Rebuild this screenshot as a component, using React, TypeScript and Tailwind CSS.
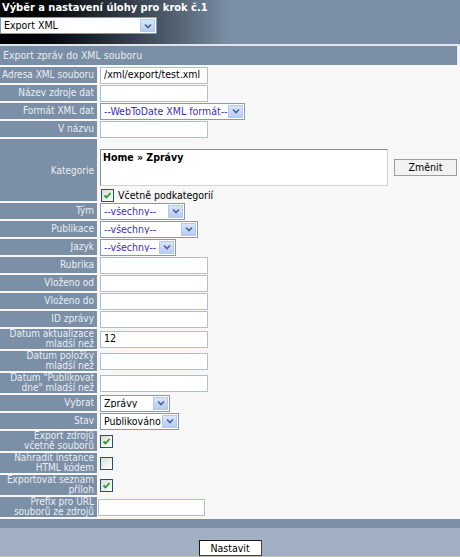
import React from 'react';

const font = { fontFamily: '"DejaVu Sans Condensed", "DejaVu Sans", Verdana, sans-serif' };

function Arrow() {
  return (
    <span className="flex h-full w-[15px] shrink-0 items-center justify-center border border-[#b4c8ee] bg-gradient-to-b from-[#dbe6fd] to-[#b7cbf5]">
      <svg width="8" height="6" viewBox="0 0 8 6">
        <path d="M1 1.5 L4 4.5 L7 1.5" fill="none" stroke="#4d6185" strokeWidth="1.6" />
      </svg>
    </span>
  );
}

function Select({ value, width, purple }: { value: string; width: string; purple?: boolean }) {
  return (
    <div className={`flex h-[17px] items-center border border-[#7f9db9] bg-white p-px ${width}`}>
      <span className={`flex-1 overflow-hidden whitespace-nowrap pl-[2px] text-[10.5px] leading-none ${purple ? 'text-[#3a2fb8]' : 'text-black'}`}>
        {value}
      </span>
      <Arrow />
    </div>
  );
}

function Input({ value, width = 'w-[108px]' }: { value?: string; width?: string }) {
  return (
    <div className={`flex h-[17px] items-center whitespace-nowrap border border-[#a9c0da] bg-white pl-[3px] text-[10.5px] text-black ${width}`}>
      {value}
    </div>
  );
}

function Check({ checked }: { checked?: boolean }) {
  return (
    <span className="flex h-[13px] w-[13px] shrink-0 items-center justify-center border border-[#1c5180] bg-gradient-to-br from-[#dcdcd6] to-white">
      {checked && (
        <svg width="9" height="9" viewBox="0 0 9 9">
          <path d="M1.5 4.5 L3.5 6.5 L7.5 2" fill="none" stroke="#21a121" strokeWidth="1.8" />
        </svg>
      )}
    </span>
  );
}

function Row({ label, tall, children, pad = 'pl-[3px]' }: { label: React.ReactNode; tall?: boolean; children: React.ReactNode; pad?: string }) {
  return (
    <div className={`flex ${tall ? 'h-[20px]' : 'h-[16px]'}`}>
      <div className="flex w-[97px] shrink-0 items-center justify-end whitespace-nowrap bg-[#7b8fa7] pr-[3px] text-right text-[10px] leading-[10px] text-[#e9eef3]">
        <span>{label}</span>
      </div>
      <div className={`flex flex-1 items-center ${pad}`}>{children}</div>
    </div>
  );
}

export default function App() {
  return (
    <div className="h-[557px] w-[460px] overflow-hidden bg-[#f7f7f7] font-stretch-condensed" style={font}>
      {/* header */}
      <div className="h-[44px] bg-gradient-to-r from-black via-[#7a8fa6] via-50% to-[#7a8fa6] pt-px">
        <div className="pl-[2px] text-[11px] font-bold leading-[13px] text-white">Výběr a nastavení úlohy pro krok č.1</div>
        <div className="mt-[3px]">
          <Select value="Export XML" width="w-[157px]" />
        </div>
      </div>
      <div className="h-[2px] bg-[#dfe5ed]" />
      <div className="flex h-[19px] w-[458px] items-center border-r border-[#e4e9f0] bg-[#7a8fa6] pl-[3px] text-[10.5px] text-[#e6ebf1]">
        Export zpráv do XML souboru
      </div>
      <div className="h-[2px]" />

      <div className="flex flex-col gap-[2px]">
        <Row label="Adresa XML souboru"><Input value="/xml/export/test.xml" /></Row>
        <Row label="Název zdroje dat"><Input /></Row>
        <Row label="Formát XML dat"><Select value="--WebToDate XML formát--" width="w-[145px]" purple /></Row>
        <Row label="V názvu"><Input /></Row>

        <div className="flex h-[62px]">
          <div className="flex w-[97px] shrink-0 items-center justify-end bg-[#7b8fa7] pr-[3px] text-[10px] text-[#e9eef3]">
            Kategorie
          </div>
          <div className="flex flex-1 flex-col pl-[3px] pt-[10px]">
            <div className="flex items-center">
              <div className="h-[37px] w-[288px] border border-t-[#8d8d8d] border-l-[#8d8d8d] border-r-[#d4d4d4] border-b-[#d4d4d4] bg-white pl-[2px] pt-[1px] text-[10.5px] font-bold leading-[13px] text-black">
                Home » Zprávy
              </div>
              <button className="ml-[6px] flex h-[17px] w-[63px] items-center justify-center border border-[#9d9d9d] bg-[#f2f2f2] text-[10.5px] text-black">
                Změnit
              </button>
            </div>
            <div className="mt-[2px] flex items-center gap-[4px] pl-px text-[10.5px] text-black">
              <Check checked />
              <span>Včetně podkategorií</span>
            </div>
          </div>
        </div>

        <Row label="Tým"><Select value="--všechny--" width="w-[85px]" purple /></Row>
        <Row label="Publikace"><Select value="--všechny--" width="w-[98px]" purple /></Row>
        <Row label="Jazyk"><Select value="--všechny--" width="w-[76px]" purple /></Row>
        <Row label="Rubrika"><Input /></Row>
        <Row label="Vloženo od"><Input /></Row>
        <Row label="Vloženo do"><Input /></Row>
        <Row label="ID zprávy"><Input /></Row>
        <Row tall label={<>Datum aktualizace<br />mladší než</>}><Input value="12" /></Row>
        <Row tall label={<>Datum položky<br />mladší než</>}><Input /></Row>
        <Row tall label={<>Datum "Publikovat<br />dne" mladší než</>}><Input /></Row>
        <Row label="Vybrat"><Select value="Zprávy" width="w-[70px]" /></Row>
        <Row label="Stav"><Select value="Publikováno" width="w-[79px]" /></Row>
        <Row tall label={<>Export zdrojů<br />včetně souborů</>}><Check checked /></Row>
        <Row tall label={<>Nahradit instance<br />HTML kódem</>}><Check /></Row>
        <Row tall label={<>Exportovat seznam<br />příloh</>}><Check checked /></Row>
        <Row tall pad="pl-px" label={<>Prefix pro URL<br />souborů ze zdrojů</>}><Input width="w-[107px]" /></Row>
      </div>

      <div className="mt-[2px] h-[9px] bg-[#7a8fa6]" />
      <div className="flex h-[28px] justify-center bg-[#a0afc1] pt-[12px]">
        <button className="h-[16px] w-[63px] border border-[#1a1a1a] border-b-[#404040] border-r-[#404040] bg-white text-[10.5px] leading-none text-black">
          Nastavit
        </button>
      </div>
      <div className="h-px bg-[#c9c1ac]" />
    </div>
  );
}
